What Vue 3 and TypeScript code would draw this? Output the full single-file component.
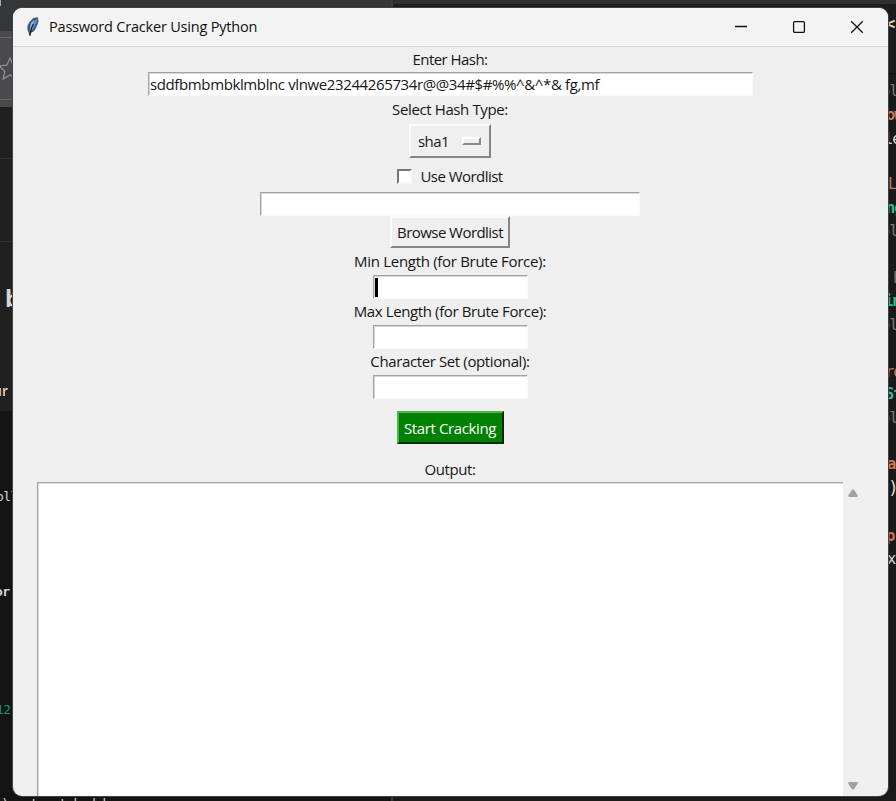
<script setup lang="ts">
import { ref } from 'vue'

interface Fragment { text: string; x: number; y: number; tone: string }

const hash = ref('sddfbmbmbklmblnc vlnwe23244265734r@@34#$#%%^&^*& fg,mf')

const fragments: Fragment[] = [
  { text: 'b', x: 5, y: 298, tone: 'heading' },
  { text: 'ur', x: -7, y: 391, tone: 'sans' },
  { text: 'oll', x: -4, y: 497, tone: 'mono' },
  { text: 'or', x: -5, y: 592, tone: 'mono bold' },
  { text: '12', x: -4, y: 710, tone: 'mono green' },
  { text: '() get patched by', x: -6, y: 804, tone: 'mono' },
  { text: '<', x: 886, y: 24, tone: 'code white bold' },
  { text: 'ol', x: 881, y: 91, tone: 'code gray' },
  { text: 'ow', x: 886, y: 115, tone: 'code orange bold' },
  { text: 'le', x: 884, y: 139, tone: 'code white' },
  { text: 'L', x: 888, y: 184, tone: 'code orange' },
  { text: 'ng', x: 886, y: 208, tone: 'code teal bold' },
  { text: 'ol', x: 881, y: 231, tone: 'code gray' },
  { text: 't', x: 881, y: 278, tone: 'code orange' },
  { text: 'h', x: 893, y: 278, tone: 'code gray' },
  { text: 'in', x: 884, y: 301, tone: 'code teal bold' },
  { text: 'ol', x: 881, y: 325, tone: 'code gray' },
  { text: 'ro', x: 885, y: 372, tone: 'code orange' },
  { text: 'St', x: 885, y: 394, tone: 'code teal bold' },
  { text: 'ol', x: 881, y: 418, tone: 'code gray' },
  { text: 'a', x: 887, y: 464, tone: 'code orange bold' },
  { text: ')', x: 888, y: 488, tone: 'code large white' },
  { text: 'p', x: 886, y: 536, tone: 'code orange bold' },
  { text: 'x', x: 887, y: 559, tone: 'code white' },
]
</script>

<template>
  <div class="desktop">
    <div class="backdrop">
      <div class="browser">
        <div class="tabs"></div>
        <div class="toolbar">
          <svg class="star" width="24" height="24" viewBox="0 0 24 24">
            <path d="M11 1l3.2 7.2 7.8.8-5.9 5.2 1.8 7.8-6.9-4-6.9 4 1.8-7.8L0 9l7.8-.8z" />
          </svg>
        </div>
        <div class="band short"></div>
        <div class="band tall"></div>
        <div class="band page"></div>
        <div class="terminal"></div>
      </div>
      <div class="divider"></div>
      <div class="editor">
        <div class="editor-top"></div>
        <div class="editor-tabs"></div>
      </div>
    </div>
    <span
      v-for="(f, i) in fragments"
      :key="i"
      class="fragment"
      :class="f.tone"
      :style="{ left: f.x + 'px', top: f.y + 'px' }"
    >{{ f.text }}</span>

    <main class="window">
      <header class="titlebar">
        <svg class="feather" width="14" height="20" viewBox="0 0 14 20">
          <path d="M4 19L3 15.5Q0 10 4 5Q7 0 11.5.8Q13 4 10.5 9Q8.5 15 4.5 15.5z" fill="#375d85" stroke="#4b4b4b" stroke-width=".8" />
          <path d="M5 13Q4 8 9 3L11 1.5Q11.5 5 9 9L6.5 13z" fill="#4d8fd6" />
          <path d="M3.5 14L5 6L8 3L6.5 9z" fill="#8fb9df" />
          <path d="M7.5 7L5.5 11L4 18" fill="none" stroke="#17212c" stroke-width="1.2" />
        </svg>
        <h1>Password Cracker Using Python</h1>
        <div class="controls">
          <svg width="14" height="14" viewBox="0 0 14 14"><path d="M1 6.5h12" /></svg>
          <svg width="14" height="14" viewBox="0 0 14 14"><rect x="1.6" y="1.6" width="10.8" height="10.8" rx="1.2" /></svg>
          <svg width="14" height="14" viewBox="0 0 14 14"><path d="M1.2 1.2l11.6 11.6M12.8 1.2L1.2 12.8" /></svg>
        </div>
      </header>

      <div class="form">
        <div class="label"><span class="tight">Enter Hash:</span></div>
        <div class="entry hash"><span>{{ hash }}</span></div>
        <div class="label"><span>Select Hash Type:</span></div>
        <button class="raised option"><span class="tight">sha1</span><i class="indicator"></i></button>
        <label class="check"><i class="box"></i><span class="tight">Use Wordlist</span></label>
        <div class="entry wordlist"></div>
        <button class="raised browse"><span class="tight">Browse Wordlist</span></button>
        <div class="label"><span class="loose">Min Length (for Brute Force):</span></div>
        <div class="entry small"><i class="caret"></i></div>
        <div class="label"><span>Max Length (for Brute Force):</span></div>
        <div class="entry small"></div>
        <div class="label"><span>Character Set (optional):</span></div>
        <div class="entry small"></div>
        <button class="start"><span>Start Cracking</span></button>
        <div class="label output-label"><span>Output:</span></div>
      </div>

      <div class="output">
        <div class="text"></div>
        <div class="scrollbar">
          <svg width="12" height="9" viewBox="0 0 12 9"><path d="M5 .8Q6 0 7 .8L10.8 6.6Q11 8 10 8H2Q1 8 1.2 6.6z" /></svg>
          <svg width="12" height="9" viewBox="0 0 12 9"><path d="M5 8.2Q6 9 7 8.2L10.8 2.4Q11 1 10 1H2Q1 1 1.2 2.4z" /></svg>
        </div>
      </div>
    </main>
  </div>
</template>

<style>
html, body { margin: 0; overflow: hidden; background: #1b1b1b; }
</style>

<style scoped>
* { box-sizing: border-box; }
.desktop { position: relative; width: 896px; height: 801px; overflow: hidden; background: #1b1b1b; }
.backdrop { display: flex; height: 801px; }
.browser { width: 391px; display: flex; flex-direction: column; background: #202020; }
.tabs { height: 31px; flex: none; background: linear-gradient(#aaa, #aaa) 0 0 / 1px 6px no-repeat #35363a; }
.toolbar { height: 76px; flex: none; background: #49494d; border-top: 6px solid #49494d; box-shadow: inset 0 1px #66676a, inset 0 -7px #49494d, inset 0 -8px #66676a; }
.star { display: block; margin: 20px 0 0 -1px; fill: none; stroke: #929294; stroke-width: 1.2; }
.band { flex: none; border-bottom: 1px solid #303030; background: #202020; }
.short { height: 52px; }
.tall { height: 83px; }
.page { height: 169px; border: 0; }
.terminal { flex: 1; background: #141414; }
.divider { width: 2px; background: #3b3b3b; }
.editor { flex: 1; background: #1a1a1a; }
.editor-top { height: 4px; background: #303030; }
.editor-tabs { height: 70px; border-bottom: 1px solid #101010; background: #1d1d1d; }
.fragment { position: absolute; white-space: nowrap; line-height: 20px; margin-top: -10px; color: #d5d5d5; }
.heading { font: bold 24px/20px "Noto Sans", sans-serif; }
.sans { font: 600 14px/20px "Open Sans", sans-serif; }
.mono { font: 13px/20px "DejaVu Sans Mono", monospace; letter-spacing: -.6px; }
.green { color: #149567; }
.code { font: 15.5px/20px "DejaVu Sans Mono", monospace; letter-spacing: -1px; }
.bold { font-weight: bold; }
.large { font-size: 18px; }
.white { color: #d6d6d6; }
.gray { color: #777; }
.orange { color: #c9775b; }
.teal { color: #32b89a; }

.window {
  position: absolute; left: 13px; top: 8px; width: 875px; height: 788px;
  display: flex; flex-direction: column; overflow: hidden;
  border-radius: 9px; background: #efefef; color: #161616;
  font-family: "Open Sans", "Noto Sans", sans-serif; font-size: 15px;
  box-shadow: 0 0 0 1px #424242;
}
.titlebar { height: 39px; flex: none; display: flex; align-items: center; padding: 0 22px 1px 13px; background: #f3f3f3; border-bottom: 1px solid #d4d4d4; }
.feather { margin-right: 9px; }
h1 { margin: 0; flex: 1; font-size: 14.5px; font-weight: 400; line-height: 20px; white-space: nowrap; letter-spacing: -.2px; color: #111; }
.controls { display: flex; gap: 44px; padding-right: 2px; }
.controls svg { display: block; fill: none; stroke: #111; stroke-width: 1.3; }

.form { flex: none; display: flex; flex-direction: column; align-items: center; }
.form span { white-space: nowrap; letter-spacing: -.38px; }
.form .tight { letter-spacing: -.55px; }
.form .loose { letter-spacing: -.3px; }
.label { height: 25px; line-height: 25px; display: flex; justify-content: center; margin-right: 1px; }
.entry { height: 24px; background: #fff; border: 1px solid; border-color: #a3a3a3 #fafafa #fafafa #a3a3a3; box-shadow: inset 1px 1px #d6d6d6; display: flex; align-items: center; }
.hash { width: 605px; padding-left: 1px; margin-bottom: 1px; }
.wordlist { width: 380px; margin-right: 1px; }
.small { width: 155px; margin-top: 1px; }
.caret { width: 3px; height: 19px; margin-left: 1px; background: #000; }
button { font: inherit; color: inherit; margin: 0; border-radius: 0; display: flex; align-items: center; justify-content: center; }
.raised { background: #efefef; border: 2px solid; border-color: #fbfbfb #858585 #858585 #fbfbfb; padding: 0; }
.option { width: 82px; height: 34px; margin: 2px 1px 0 0; justify-content: space-between; padding: 0 8px 0 7px; }
.indicator { width: 19px; height: 8px; border: 2px solid; border-color: #fff #888 #888 #fff; }
.check { height: 28px; margin: 4px 1px 2px 0; display: flex; align-items: center; gap: 8px; }
.box { width: 15px; height: 15px; background: #fff; border: 2px solid; border-color: #777 #f8f8f8 #f8f8f8 #777; }
.browse { width: 120px; height: 32px; margin: 0 1px 1px 0; }
.start { width: 107px; height: 33px; margin: 12px 1px 0 0; padding: 0; background: #008000; color: #fff; border: 2px solid; border-color: #51b451 #052b05 #052b05 #51b451; }
.output-label { margin-top: 13px; }

.output { flex: 1; display: flex; min-height: 0; padding: 0 25px 0 24px; }
.text { flex: 1; background: #fff; border-top: 1px solid #a3a3a3; border-left: 1px solid #a3a3a3; box-shadow: inset 1px 1px #dedede; }
.scrollbar { width: 20px; display: flex; flex-direction: column; justify-content: space-between; align-items: center; padding: 7px 0 6px; }
.scrollbar svg { display: block; fill: #a2a2a2; }
</style>
